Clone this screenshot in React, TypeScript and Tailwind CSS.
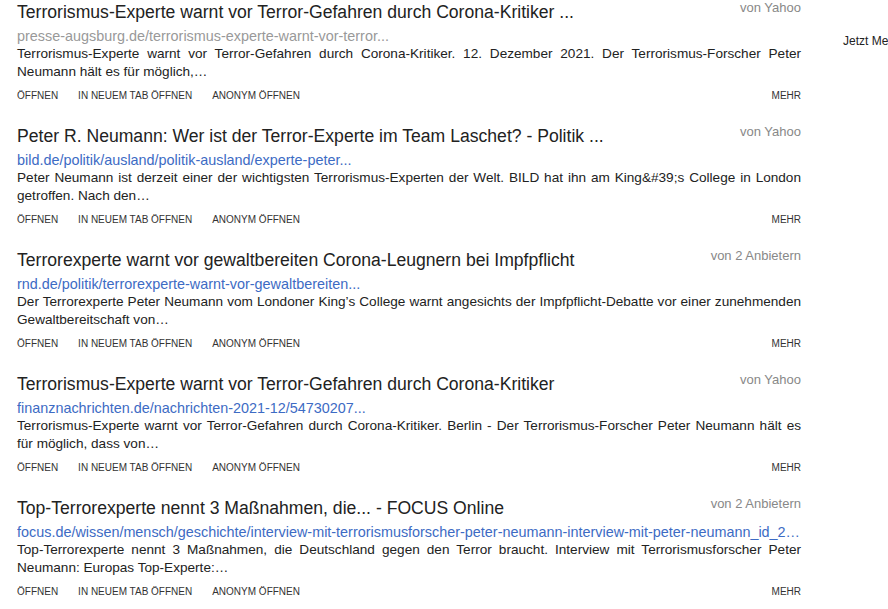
const results = [
  {
    title: "Terrorismus-Experte warnt vor Terror-Gefahren durch Corona-Kritiker ...",
    url: "presse-augsburg.de/terrorismus-experte-warnt-vor-terror...",
    visited: true,
    source: "von Yahoo",
    snippet:
      "Terrorismus-Experte warnt vor Terror-Gefahren durch Corona-Kritiker. 12. Dezember 2021. Der Terrorismus-Forscher Peter Neumann hält es für möglich,…",
  },
  {
    title: "Peter R. Neumann: Wer ist der Terror-Experte im Team Laschet? - Politik ...",
    url: "bild.de/politik/ausland/politik-ausland/experte-peter...",
    source: "von Yahoo",
    snippet:
      "Peter Neumann ist derzeit einer der wichtigsten Terrorismus-Experten der Welt. BILD hat ihn am King&#39;s College in London getroffen. Nach den…",
  },
  {
    title: "Terrorexperte warnt vor gewaltbereiten Corona-Leugnern bei Impfpflicht",
    url: "rnd.de/politik/terrorexperte-warnt-vor-gewaltbereiten...",
    source: "von 2 Anbietern",
    snippet:
      "Der Terrorexperte Peter Neumann vom Londoner King’s College warnt angesichts der Impfpflicht-Debatte vor einer zunehmenden Gewaltbereitschaft von…",
  },
  {
    title: "Terrorismus-Experte warnt vor Terror-Gefahren durch Corona-Kritiker",
    url: "finanznachrichten.de/nachrichten-2021-12/54730207...",
    source: "von Yahoo",
    snippet:
      "Terrorismus-Experte warnt vor Terror-Gefahren durch Corona-Kritiker. Berlin - Der Terrorismus-Forscher Peter Neumann hält es für möglich, dass von…",
  },
  {
    title: "Top-Terrorexperte nennt 3 Maßnahmen, die... - FOCUS Online",
    url: "focus.de/wissen/mensch/geschichte/interview-mit-terrorismusforscher-peter-neumann-interview-mit-peter-neumann_id_28473021.html",
    source: "von 2 Anbietern",
    snippet:
      "Top-Terrorexperte nennt 3 Maßnahmen, die Deutschland gegen den Terror braucht. Interview mit Terrorismusforscher Peter Neumann: Europas Top-Experte:…",
  },
]

function ResultItem({ item }: { item: (typeof results)[number] }) {
  return (
    <div className="mb-[21px]">
      {/* title + source */}
      <div className="flex items-start justify-between">
        <a className="pt-[1px] text-[17.6px] leading-[22px] text-[#222]">{item.title}</a>
        <span className="ml-4 shrink-0 text-[13px] leading-[16px] text-[#888]">{item.source}</span>
      </div>
      <div
        className={`mt-[4px] truncate text-[14.4px] leading-[18px] ${
          item.visited ? "text-[#999]" : "text-[#3d6bc4]"
        }`}
      >
        {item.url}
      </div>
      <p className="text-justify text-[13.6px] leading-[18px] text-[#222]">{item.snippet}</p>

      {/* actions */}
      <div className="mt-[8px] flex items-center justify-between text-[10px] uppercase leading-[14px] text-[#333]">
        <div className="flex gap-5">
          <span>Öffnen</span>
          <span>In neuem Tab öffnen</span>
          <span>Anonym öffnen</span>
        </div>
        <span>Mehr</span>
      </div>
    </div>
  )
}

export default function App() {
  return (
    <div className="flex h-[609px] w-[888px] overflow-hidden bg-white font-['Liberation_Sans',Arial,sans-serif]">
      <main className="ml-[17px] w-[784px] shrink-0">
        {results.map((item) => (
          <ResultItem key={item.url} item={item} />
        ))}
      </main>

      {/* sidebar, cut off at the window edge */}
      <aside className="ml-[42px] shrink-0 pt-[33px] text-[12px] leading-[16px] whitespace-nowrap text-[#222]">
        Jetzt Mehr erfahren
      </aside>
    </div>
  )
}
